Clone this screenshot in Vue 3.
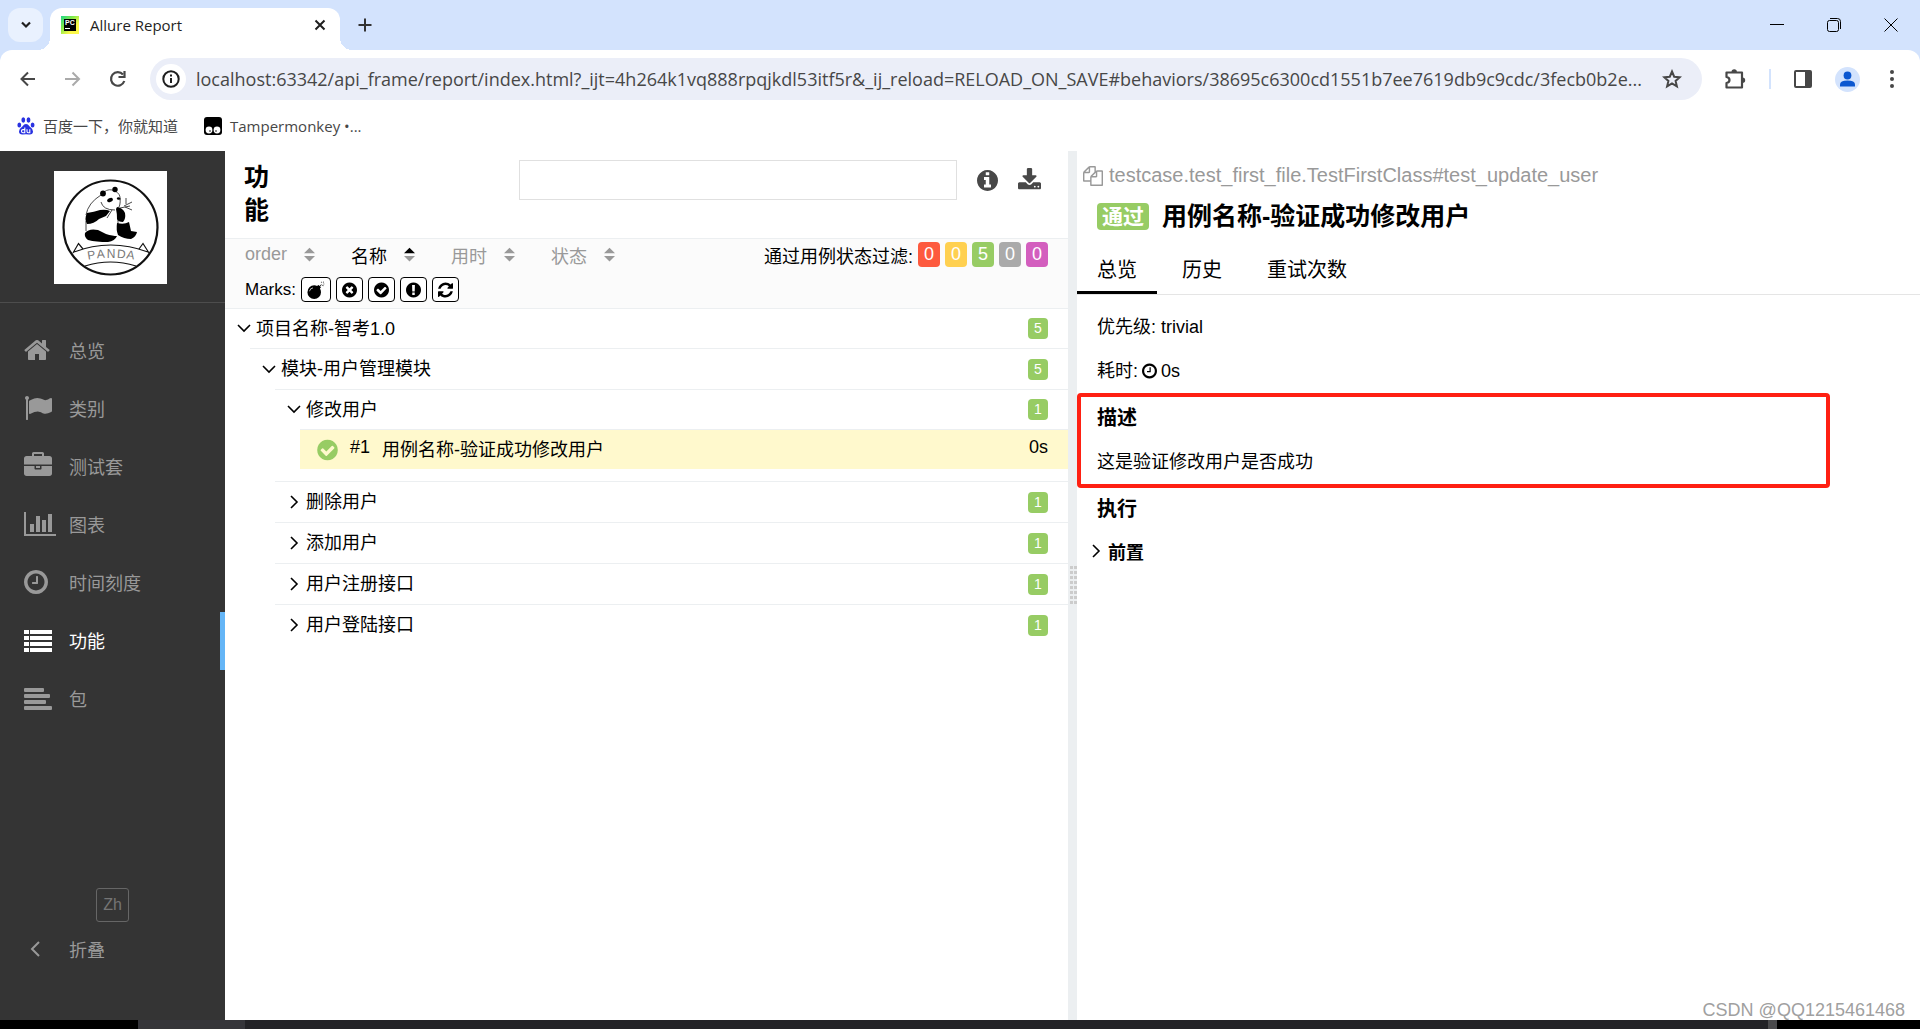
<script setup>
import { h, ref } from 'vue'

const disc = 'q0 209-103 385.5t-279.5 279.5-385.5 103-385.5-103-279.5-279.5-103-385.5 103-385.5 279.5-279.5 385.5-103 385.5 103 279.5 279.5 103 385.5z'

const glyphs = {
  home: ['64 0 1664 1792', 'M1472 992v480q0 26-19 45t-45 19h-384v-384h-256v384h-384q-26 0-45-19t-19-45v-480q0-1 .5-3t.5-3l575-474 575 474q1 2 1 6zm223-69l-62 74q-8 9-21 11h-3q-13 0-21-7l-692-577-692 577q-12 8-24 7-13-2-21-11l-62-74q-8-10-7-23.5t11-21.5l719-599q32-26 76-26t76 26l244 204v-195q0-14 9-23t23-9h192q14 0 23 9t9 23v408l219 182q10 8 11 21.5t-7 23.5z'],
  flag: ['0 0 1792 1792', 'M320 256q0 72-64 110v1266q0 13-9.500 22.500t-22.500 9.500h-64q-13 0-22.500-9.500t-9.500-22.500v-1266q-64-38-64-110 0-53 37.500-90.500t90.500-37.500 90.500 37.500 37.500 90.500zm1472 64v763q0 25-12.500 38.500t-39.500 27.500q-215 116-369 116-61 0-123.500-22t-108.500-48-115.500-48-142.500-22q-192 0-464 146-17 9-33 9-26 0-45-19t-19-45v-742q0-32 31-55 21-14 79-43 236-120 421-120 107 0 200 29t219 88q38 19 88 19 54 0 117.500-21t110-47 88-47 54.500-21q26 0 45 19t19 45z'],
  briefcase: ['0 0 1792 1792', 'M640 256h512v-128h-512v128zm1152 640v480q0 66-47 113t-113 47h-1472q-66 0-113-47t-47-113v-480h672v160q0 26 19 45t45 19h320q26 0 45-19t19-45v-160h672zm-768 0v128h-256v-128h256zm768-480v384h-1792v-384q0-66 47-113t113-47h352v-160q0-40 28-68t68-28h576q40 0 68 28t28 68v160h352q66 0 113 47t47 113z'],
  chart: ['0 0 2048 1792', 'M640 896v512h-256v-512h256zm384-512v1024h-256v-1024h256zm1024 1152v128h-2048v-1536h128v1408h1920zm-640-896v768h-256v-768h256zm384-384v1152h-256v-1152h256z'],
  clock: ['128 0 1536 1792', 'M1024 544v448q0 14-9 23t-23 9h-320q-14 0-23-9t-9-23v-64q0-14 9-23t23-9h224v-352q0-14 9-23t23-9h64q14 0 23 9t9 23zm416 352q0-148-73-273t-198-198-273-73-273 73-198 198-73 273 73 273 198 198 273 73 273-73 198-198 73-273zm224 0' + disc],
  list: ['0 0 1792 1792', 'M0 256h320v256h-320zM384 256h1408v256h-1408zM0 640h320v256h-320zM384 640h1408v256h-1408zM0 1024h320v256h-320zM384 1024h1408v256h-1408zM0 1408h320v256h-320zM384 1408h1408v256h-1408z'],
  align: ['0 0 1792 1792', 'M64 256h1152q64 0 64 64v128q0 64-64 64h-1152q-64 0-64-64v-128q0-64 64-64zM64 640h1536q64 0 64 64v128q0 64-64 64h-1536q-64 0-64-64v-128q0-64 64-64zM64 1024h1280q64 0 64 64v128q0 64-64 64h-1280q-64 0-64-64v-128q0-64 64-64zM64 1408h1664q64 0 64 64v128q0 64-64 64h-1664q-64 0-64-64v-128q0-64 64-64z'],
  times: ['128 0 1536 1792', 'M1277 1122q0-26-19-45l-181-181 181-181q19-19 19-45 0-27-19-46l-90-90q-19-19-46-19-26 0-45 19l-181 181-181-181q-19-19-45-19-27 0-46 19l-90 90q-19 19-19 46 0 26 19 45l181 181-181 181q-19 19-19 45 0 27 19 46l90 90q19 19 46 19 26 0 45-19l181-181 181 181q19 19 45 19 27 0 46-19l90-90q19-19 19-46zm387-226' + disc],
  check: ['128 0 1536 1792', 'M1412 734q0-28-18-46l-91-90q-19-19-45-19t-45 19l-408 407-226-226q-19-19-45-19t-45 19l-91 90q-18 18-18 46 0 27 18 45l362 362q19 19 45 19 27 0 46-19l543-543q18-18 18-45zm252 162' + disc],
  info: ['128 0 1536 1792', 'M1152 1376v-160q0-14-9-23t-23-9h-96v-512q0-14-9-23t-23-9h-320q-14 0-23 9t-9 23v160q0 14 9 23t23 9h96v320h-96q-14 0-23 9t-9 23v160q0 14 9 23t23 9h448q14 0 23-9t9-23zm-128-896v-160q0-14-9-23t-23-9h-192q-14 0-23 9t-9 23v160q0 14 9 23t23 9h192q14 0 23-9t9-23zm640 416' + disc],
  exclaim: ['128 0 1536 1792', 'M896 128q209 0 385.500 103t279.500 279.500 103 385.500-103 385.500-279.500 279.500-385.500 103-385.500-103-279.500-279.500-103-385.500 103-385.500 279.500-279.500 385.500-103zm128 1247v-190q0-14-9-23.500t-22-9.500h-192q-13 0-23 10t-10 23v190q0 13 10 23t23 10h192q13 0 22-9.500t9-23.500zm-2-344l18-621q0-12-10-18-10-8-24-8h-220q-14 0-24 8-10 6-10 18l17 621q0 10 10 17.500t24 7.500h185q14 0 23.500-7.500t10.500-17.500z'],
  refresh: ['128 0 1536 1792', 'M1639 1056q0 5-1 7-64 268-268 434.500t-478 166.500q-146 0-282.500-55t-243.500-157l-129 129q-19 19-45 19t-45-19-19-45v-448q0-26 19-45t45-19h448q26 0 45 19t19 45-19 45l-137 137q71 66 161 102t187 36q134 0 250-65t186-179q11-17 53-117 8-23 30-23h192q13 0 22.500 9.500t9.500 22.500zm25-800v448q0 26-19 45t-45 19h-448q-26 0-45-19t-19-45 19-45l138-138q-148-137-349-137-134 0-250 65t-186 179q-11 17-53 117-8 23-30 23h-199q-13 0-22.500-9.500t-9.500-22.500v-7q65-268 270-434.500t480-166.500q146 0 284 55.500t245 156.500l130-129q19-19 45-19t45 19 19 45z'],
  bomb: ['0 0 1792 1792', 'M128 1088a608 608 0 0 1 608-608q140 0 262 54l74-74q34-34 68 0l80 80 150-150 40 40-150 150 52 52q34 34 0 68l-64 64q96 140 96 324a608 608 0 0 1-1216 0zM288 1000q16 20 52 6 60-216 276-276 20-30-10-54-250 48-318 324zM1340 250h60v-90h-60zM1500 200l40 40 70-70-40-40zM1540 330v60h110v-60zM1490 420l-40 40 90 90 40-40z'],
  download: ['64 0 1664 1792', 'M1344 1344q0-26-19-45t-45-19-45 19-19 45 19 45 45 19 45-19 19-45zm256 0q0-26-19-45t-45-19-45 19-19 45 19 45 45 19 45-19 19-45zm128-224v320q0 40-28 68t-68 28h-1472q-40 0-68-28t-28-68v-320q0-40 28-68t68-28h465l135 136q58 56 136 56t136-56l136-136h464q40 0 68 28t28 68zm-325-569q17 41-14 70l-448 448q-18 19-45 19t-45-19l-448-448q-31-29-14-70 17-39 59-39h256v-448q0-26 19-45t45-19h256q26 0 45 19t19 45v448h256q42 0 59 39z'],
  copy: ['0 0 1792 1792', 'M1696 384q40 0 68 28t28 68v1216q0 40-28 68t-68 28h-960q-40 0-68-28t-28-68v-288h-544q-40 0-68-28t-28-68v-672q0-40 20-88t48-76l408-408q28-28 76-48t88-20h416q40 0 68 28t28 68v328q68-40 128-40h416zm-544 213l-299 299h299v-299zm-640-384l-299 299h299v-299zm196 647l316-316v-416h-384v416q0 40-28 68t-68 28h-416v640h512v-256q0-40 20-88t48-76zm956 804v-1152h-384v416q0 40-28 68t-68 28h-416v640h896z'],
}

const Glyph = (props) => {
  const [viewBox, d] = glyphs[props.name]
  const [, , w, ht] = viewBox.split(' ').map(Number)
  const height = Number(props.size)
  return h('svg', { viewBox, height, width: Math.round((w / ht) * height), 'aria-hidden': 'true' }, [
    h('path', { d, fill: 'currentColor' }),
  ])
}
Glyph.props = ['name', 'size']

const url = ref('localhost:63342/api_frame/report/index.html?_ijt=4h264k1vq888rpqjkdl53itf5r&_ij_reload=RELOAD_ON_SAVE#behaviors/38695c6300cd1551b7ee7619db9c9cdc/3fecb0b2e...')
const query = ref('')

const menu = [
  { icon: 'home', label: '总览' },
  { icon: 'flag', label: '类别' },
  { icon: 'briefcase', label: '测试套' },
  { icon: 'chart', label: '图表' },
  { icon: 'clock', label: '时间刻度' },
  { icon: 'list', label: '功能', active: true },
  { icon: 'align', label: '包' },
]

const sorters = [
  { label: 'order' },
  { label: '名称', active: true },
  { label: '用时' },
  { label: '状态' },
]

const statuses = [
  { name: 'failed', count: 0 },
  { name: 'broken', count: 0 },
  { name: 'passed', count: 5 },
  { name: 'skipped', count: 0 },
  { name: 'unknown', count: 0 },
]

const marks = ['bomb', 'times', 'check', 'exclaim', 'refresh']
const closed = ['删除用户', '添加用户', '用户注册接口', '用户登陆接口']
const tabs = ['总览', '历史', '重试次数']
</script>

<template>
  <div class="window">
    <header class="chrome">
      <div class="strip">
        <button class="tab-search" aria-label="Search tabs">
          <svg width="12" height="8" viewBox="0 0 12 8"><path d="M2 1.500l4 4 4-4" fill="none" stroke="#1f1f1f" stroke-width="2.200" /></svg>
        </button>
        <div class="tab">
          <svg width="18" height="18" viewBox="0 0 18 18">
            <defs>
              <linearGradient id="py" x1="0" y1="0" x2="1" y2="1">
                <stop offset="0" stop-color="#21d789" /><stop offset=".35" stop-color="#7ee84a" /><stop offset=".7" stop-color="#fcf84a" />
              </linearGradient>
            </defs>
            <rect width="18" height="18" fill="url(#py)" />
            <rect x="3" y="3" width="12" height="12" fill="#000" />
            <text x="4" y="9" font-size="7" font-weight="700" font-family="Liberation Sans, sans-serif" fill="#fff">PC</text>
            <rect x="4" y="12" width="5" height="1" fill="#fff" />
          </svg>
          <span class="tab-title">Allure Report</span>
          <button class="plain" aria-label="Close tab">
            <svg width="12" height="12" viewBox="0 0 12 12"><path d="M1.500 1.500l9 9M10.500 1.500l-9 9" stroke="#1f1f1f" stroke-width="2" /></svg>
          </button>
        </div>
        <button class="plain new-tab" aria-label="New tab">
          <svg width="14" height="14" viewBox="0 0 14 14"><path d="M7 .5v13M.5 7h13" stroke="#333" stroke-width="2" /></svg>
        </button>
        <div class="win-controls">
          <button class="plain" aria-label="Minimize"><svg width="14" height="14" viewBox="0 0 14 14"><path d="M0 6.500h14" stroke="#000" /></svg></button>
          <button class="plain" aria-label="Restore"><svg width="14" height="14" viewBox="0 0 14 14"><rect x=".5" y="2.500" width="11" height="11" rx="2" fill="none" stroke="#000" /><path d="M3 .5h7.500q3 0 3 3V11" fill="none" stroke="#000" /></svg></button>
          <button class="plain" aria-label="Close"><svg width="14" height="14" viewBox="0 0 14 14"><path d="M.5.5l13 13M13.500.5l-13 13" stroke="#000" /></svg></button>
        </div>
      </div>

      <div class="toolbar">
        <div class="nav">
          <button class="plain" aria-label="Back"><svg width="18" height="18" viewBox="0 0 18 18"><path d="M16 9H3M9 2.500L2.500 9l6.500 6.500" fill="none" stroke="#474747" stroke-width="2" /></svg></button>
          <button class="plain" aria-label="Forward"><svg width="18" height="18" viewBox="0 0 18 18"><path d="M1 9h14M8.500 2.500L15 9l-6.500 6.500" fill="none" stroke="#aaa" stroke-width="2" /></svg></button>
          <button class="plain" aria-label="Reload"><svg width="18" height="18" viewBox="0 0 18 18"><path d="M14 4.500A6.800 6.800 0 1 0 15.300 11" fill="none" stroke="#474747" stroke-width="2.200" /><path d="M15.500 1v6H9.500" fill="none" stroke="#474747" stroke-width="2.200" /></svg></button>
        </div>
        <div class="omnibox">
          <button class="site-info" aria-label="Site information">
            <svg width="18" height="18" viewBox="0 0 18 18"><circle cx="9" cy="9" r="7.700" fill="none" stroke="#1f1f1f" stroke-width="2" /><path d="M9 8v5M9 4.500v2" stroke="#1f1f1f" stroke-width="2" /></svg>
          </button>
          <input v-model="url" class="address" aria-label="Address" />
          <button class="plain" aria-label="Bookmark">
            <svg width="20" height="20" viewBox="0 0 20 20"><path d="M10 2.500l2.200 5.200 5.600.5-4.200 3.700 1.300 5.500-4.900-2.900-4.900 2.900 1.300-5.500L2.200 8.200l5.600-.5z" fill="none" stroke="#474747" stroke-width="2" /></svg>
          </button>
        </div>
        <div class="actions">
          <button class="plain" aria-label="Extensions">
            <svg width="22" height="22" viewBox="0 0 22 22"><path d="M2.500 4.500h15.500v15H2.500v-4.500q3-.5 3-3t-3-3z" fill="none" stroke="#474747" stroke-width="2.200" stroke-linejoin="round" /><path d="M7.500 4a2.700 2.700 0 0 1 5.400 0zM18.500 9.500a2.700 2.700 0 0 1 0 5.400z" fill="#474747" /></svg>
          </button>
          <span class="sep"></span>
          <button class="plain" aria-label="Side panel">
            <svg width="18" height="18" viewBox="0 0 18 18"><rect x="1" y="1" width="16" height="16" rx="1" fill="none" stroke="#474747" stroke-width="2" /><rect x="11" y="1" width="6" height="16" fill="#474747" /></svg>
          </button>
          <button class="plain" aria-label="Profile">
            <svg width="25" height="25" viewBox="0 0 25 25"><circle cx="12.500" cy="12.500" r="12.500" fill="#d3e3fd" /><circle cx="12.500" cy="8.500" r="3.900" fill="#0b57d0" /><path d="M5 19.500v-2q0-4 7.500-4t7.500 4v2z" fill="#0b57d0" /></svg>
          </button>
          <button class="plain more" aria-label="Menu">
            <svg width="6" height="20" viewBox="0 0 6 20"><circle cx="3" cy="3" r="2" fill="#474747" /><circle cx="3" cy="10" r="2" fill="#474747" /><circle cx="3" cy="17" r="2" fill="#474747" /></svg>
          </button>
        </div>
      </div>

      <nav class="bookmarks">
        <a href="#">
          <svg width="18" height="18" viewBox="0 0 18 18" fill="#2932e1"><ellipse cx="2.300" cy="8" rx="1.900" ry="2.500" /><ellipse cx="6.300" cy="3" rx="1.900" ry="2.700" /><ellipse cx="11.500" cy="3" rx="1.900" ry="2.700" /><ellipse cx="15.600" cy="8" rx="1.900" ry="2.500" /><path d="M9 7q2 0 3.400 2.300 3.600 2.700 3.600 5.200 0 3.300-4 3-3-.4-6 0-4 .3-4-3 0-2.500 3.600-5.200Q7 7 9 7z" /><path d="M7.800 10.500v5.300H6q-1.500 0-1.500-1.600T6 12.600h1.500M10 12.200v2.400q0 1.200 1.200 1.200h1.600v-3.600" fill="none" stroke="#fff" stroke-width="1.100" /></svg>
          百度一下，你就知道
        </a>
        <a href="#">
          <svg width="18" height="18" viewBox="0 0 18 18"><rect width="18" height="18" rx="3" fill="#000" /><circle cx="5" cy="13" r="3.400" fill="#fff" /><circle cx="13" cy="13" r="3.400" fill="#fff" /><circle cx="6" cy="14" r=".8" /><circle cx="12" cy="14" r=".8" /></svg>
          Tampermonkey •...
        </a>
      </nav>
    </header>

    <div class="report">
      <aside class="side">
        <div class="brand">
          <svg class="logo" width="113" height="113" viewBox="0 0 113 113" role="img" aria-label="PANDA">
            <rect width="113" height="113" fill="#fff" />
            <circle cx="56.500" cy="56.500" r="47" fill="none" stroke="#111" stroke-width="2.200" />
            <path d="M20 81Q56.500 67 94 81M31 95Q56.500 87 82 95M19 82l5.500-9.500L29 78M85 78l4-5.500L95 82" fill="none" stroke="#111" stroke-width="1.200" />
            <path d="M47 24Q34 32 32 44M66 27q1 8-3 12M32 50v10M47 31q2 8 14 8M64 45v14M66 37l10-2M70 35l8-4M71 36l7 3M72 33l0-6M58 39l-5 8" fill="none" stroke="#333" stroke-width=".9" />
            <path d="M50 21q5-4 11-1 6 3 5 9" fill="none" stroke="#444" stroke-width=".9" />
            <circle cx="49" cy="22.500" r="2.900" /><circle cx="61" cy="18.500" r="2.700" />
            <ellipse cx="56" cy="29" rx="3" ry="2" transform="rotate(-25 56 29)" /><ellipse cx="64.500" cy="27.500" rx="1.600" ry="1.300" />
            <path d="M33 42q7-1 13-3 6-1 10 1l-4 5-7 3q-5 5-12 5-3-5 0-11z" />
            <path d="M63 36q6 1 8 6 1 6-2 9-5 0-6-3 0-6-1-10z" />
            <path d="M63 52q7 2 12-1l2 9 6 1q-1 5-6 7-7 0-13-4-2-5-1-12z" />
            <path d="M31 62q4-5 13-3l8 4q7 2 11 2-2 5-9 6-12 0-20-2-4-3-3-7z" />
            <g font-family="Liberation Sans, sans-serif" font-size="12" fill="#777" text-anchor="middle">
              <text x="38" y="88" transform="rotate(-9 38 88)">P</text>
              <text x="47" y="87" transform="rotate(-4 47 87)">A</text>
              <text x="57" y="87">N</text>
              <text x="67" y="87" transform="rotate(4 67 87)">D</text>
              <text x="76" y="88" transform="rotate(9 76 88)">A</text>
            </g>
          </svg>
        </div>
        <nav class="menu">
          <a v-for="m in menu" :key="m.label" href="#" :class="{ active: m.active }">
            <span class="menu-icon"><Glyph :name="m.icon" size="28" /></span>{{ m.label }}
          </a>
        </nav>
        <div class="side-foot">
          <button class="lang">Zh</button>
          <button class="collapse">
            <span class="menu-icon chevron-left"><svg width="11" height="16" viewBox="0 0 11 16"><path d="M9 1L2 8l7 7" fill="none" stroke="#999" stroke-width="2" /></svg></span>折叠
          </button>
        </div>
      </aside>

      <main class="tree-pane">
        <div class="pane-head">
          <h1>功能</h1>
          <input v-model="query" class="search" type="text" aria-label="Search" />
          <button class="plain tool" aria-label="Info"><Glyph name="info" size="25" /></button>
          <button class="plain tool" aria-label="Download"><Glyph name="download" size="25" /></button>
        </div>

        <div class="controls">
          <div class="control-row">
            <button v-for="s in sorters" :key="s.label" class="sorter" :class="{ active: s.active }">
              {{ s.label }}
              <svg width="11" height="15" viewBox="0 0 12 15"><path class="up" d="M0 6L6 0l6 6z" /><path d="M0 9h12l-6 6z" fill="#999" /></svg>
            </button>
            <div class="status-filter">
              <span>通过用例状态过滤:</span>
              <button v-for="s in statuses" :key="s.name" :class="s.name">{{ s.count }}</button>
            </div>
          </div>
          <div class="control-row marks">
            <span>Marks:</span>
            <button v-for="m in marks" :key="m" :aria-label="m" :class="{ wide: m === 'bomb' }"><Glyph :name="m" :size="m === 'bomb' ? 20 : 18" /></button>
          </div>
        </div>

        <div class="tree">
          <div class="node root">
            <svg class="arrow" width="14" height="9" viewBox="0 0 14 9"><path d="M1 1l6 6 6-6" /></svg>
            <span class="name">项目名称-智考1.0</span><span class="count">5</span>
          </div>
          <div class="branch">
            <div class="node">
              <svg class="arrow" width="14" height="9" viewBox="0 0 14 9"><path d="M1 1l6 6 6-6" /></svg>
              <span class="name">模块-用户管理模块</span><span class="count">5</span>
            </div>
            <div class="branch">
              <div class="node open">
                <svg class="arrow" width="14" height="9" viewBox="0 0 14 9"><path d="M1 1l6 6 6-6" /></svg>
                <span class="name">修改用户</span><span class="count">1</span>
              </div>
              <div class="branch leaves">
                <a href="#" class="node leaf">
                  <Glyph class="ok" name="check" size="24" />
                  <span class="order">#1</span>
                  <span class="name">用例名称-验证成功修改用户</span>
                  <span class="time">0s</span>
                </a>
              </div>
              <div v-for="c in closed" :key="c" class="node">
                <svg class="arrow" width="14" height="14" viewBox="0 0 14 14"><path d="M4 1l6 6-6 6" /></svg>
                <span class="name">{{ c }}</span><span class="count">1</span>
              </div>
            </div>
          </div>
        </div>
      </main>

      <div class="gutter"><div class="grip"></div></div>

      <section class="detail">
        <div class="full-name"><Glyph name="copy" size="20" />testcase.test_first_file.TestFirstClass#test_update_user</div>
        <h2><span class="badge">通过</span>用例名称-验证成功修改用户</h2>
        <div class="tabs">
          <button v-for="(t, i) in tabs" :key="t" :class="{ active: i === 0 }">{{ t }}</button>
        </div>
        <p class="line first">优先级: trivial</p>
        <p class="line">耗时: <Glyph class="clock" name="clock" size="18" /> 0s</p>
        <div class="marked">
          <h3>描述</h3>
          <p class="line">这是验证修改用户是否成功</p>
        </div>
        <div class="execution">
          <h3>执行</h3>
          <button class="setup">
            <svg width="9" height="14" viewBox="0 0 9 14"><path d="M1 1l6 6-6 6" fill="none" stroke="#000" stroke-width="1.600" /></svg>前置
          </button>
        </div>
      </section>
    </div>

    <div class="taskbar"><i class="t1"></i><i class="t2"></i><i class="t3"></i><i class="t4"></i><i class="t5"></i></div>
    <div class="watermark">CSDN @QQ1215461468</div>
  </div>
</template>

<style>
body {
  margin: 0;
  background: #fff;
}
</style>

<style scoped>
* {
  box-sizing: border-box;
}
button,
input {
  font: inherit;
  color: inherit;
}
button {
  cursor: pointer;
}
svg {
  display: block;
  flex: none;
}
a {
  color: inherit;
  text-decoration: none;
}
h1,
h2,
h3,
p {
  margin: 0;
}
.window {
  position: relative;
  display: flex;
  flex-direction: column;
  min-height: 100vh;
  font-family: "Liberation Sans", "Noto Sans CJK SC", sans-serif;
  font-size: 18px;
  color: #000;
}
.plain {
  display: flex;
  padding: 0;
  border: 0;
  background: none;
}

/* Browser frame */
.chrome {
  font-family: "Open Sans", "Noto Sans CJK SC", sans-serif;
  background: #d3e3fd;
}
.strip {
  display: flex;
  align-items: center;
  height: 50px;
  padding: 0 8px;
}
.tab-search {
  display: flex;
  align-items: center;
  justify-content: center;
  width: 35px;
  height: 34px;
  padding: 0;
  border: 0;
  border-radius: 12px;
  background: #e9f1fe;
}
.tab {
  position: relative;
  display: flex;
  align-items: center;
  align-self: flex-end;
  width: 290px;
  height: 42px;
  margin-left: 7px;
  padding: 0 14px 8px 11px;
  border-radius: 12px 12px 0 0;
  background: #fff;
}
.tab::before,
.tab::after {
  content: "";
  position: absolute;
  bottom: 0;
  width: 12px;
  height: 12px;
}
.tab::before {
  right: 100%;
  background: radial-gradient(circle at 0 0, transparent 12px, #fff 12px);
}
.tab::after {
  left: 100%;
  background: radial-gradient(circle at 100% 0, transparent 12px, #fff 12px);
}
.tab-title {
  flex: 1;
  padding-left: 11px;
  font-size: 15px;
  color: #1f1f1f;
}
.new-tab {
  margin-left: 18px;
}
.win-controls {
  display: flex;
  gap: 43px;
  margin-left: auto;
  padding-right: 14px;
}
.toolbar {
  display: flex;
  align-items: center;
  height: 58px;
  padding: 0 25px 0 19px;
  border-radius: 12px 12px 0 0;
  background: #fff;
}
.nav {
  display: flex;
  gap: 27px;
}
.omnibox {
  flex: 1;
  display: flex;
  align-items: center;
  gap: 10px;
  height: 42px;
  margin: 0 22px 0 23px;
  padding: 0 20px 0 6px;
  border-radius: 21px;
  background: #ebeef8;
}
.site-info {
  display: flex;
  align-items: center;
  justify-content: center;
  width: 30px;
  height: 30px;
  padding: 0;
  border: 0;
  border-radius: 50%;
  background: #fff;
}
.address {
  flex: 1;
  min-width: 0;
  padding: 0;
  border: 0;
  outline: 0;
  background: none;
  font-size: 18px;
  color: #474747;
}
.actions {
  display: flex;
  align-items: center;
  gap: 23px;
}
.more {
  margin-left: 6px;
}
.sep {
  width: 2px;
  height: 20px;
  background: #d3e3fd;
}
.bookmarks {
  display: flex;
  align-items: center;
  gap: 26px;
  height: 43px;
  padding: 0 17px 8px;
  background: #fff;
  font-size: 15px;
  color: #474747;
}
.bookmarks a {
  display: flex;
  align-items: center;
  gap: 8px;
}

/* Report */
.report {
  flex: 1;
  display: flex;
}
.side {
  flex: none;
  display: flex;
  flex-direction: column;
  width: 225px;
  background: #343434;
  color: #999;
}
.brand {
  display: flex;
  justify-content: center;
  padding: 20px 4px 18px 0;
  border-bottom: 1px solid #4d4d4d;
}
.menu {
  padding-top: 19px;
}
.menu a {
  display: flex;
  align-items: center;
  height: 58px;
  padding: 0 0 3px 24px;
}
.menu a.active {
  border-right: 5px solid #64b5f6;
  color: #fff;
}
.menu-icon {
  width: 45px;
}
.side-foot {
  display: flex;
  flex-direction: column;
  margin-top: auto;
  padding-bottom: 42px;
}
.lang {
  align-self: center;
  width: 33px;
  height: 34px;
  padding: 0;
  border: 1px solid #666;
  border-radius: 3px;
  background: none;
  font-size: 16px;
  color: #757575;
}
.collapse {
  display: flex;
  align-items: center;
  height: 56px;
  padding: 0 0 3px 24px;
  border: 0;
  background: none;
}
.chevron-left {
  padding-left: 6px;
}

.tree-pane,
.detail {
  flex: 1;
  min-width: 0;
}
.pane-head {
  display: flex;
  align-items: flex-start;
  height: 87px;
  padding: 9px 27px 0 19px;
}
.pane-head h1 {
  width: 25px;
  padding-top: 1px;
  font-size: 25px;
  line-height: 33px;
}
.search {
  flex: none;
  width: 55%;
  height: 40px;
  margin-left: auto;
  padding: 0 12px;
  border: 1px solid #e0e0e0;
  outline: 0;
}
.tool {
  margin-top: 8px;
  margin-left: 20px;
  color: #484848;
}
.controls {
  height: 71px;
  border: 1px solid #eceff1;
  border-width: 1px 0;
  background: #fbfbfb;
}
.control-row {
  display: flex;
  align-items: center;
  height: 31px;
  padding: 0 20px;
}
.sorter {
  display: flex;
  align-items: center;
  justify-content: flex-end;
  gap: 17px;
  width: 70px;
  height: 25px;
  margin-right: 30px;
  padding: 0;
  border: 0;
  background: none;
  color: #999;
}
.sorter path {
  fill: #999;
}
.sorter.active,
.sorter.active .up {
  color: #000;
  fill: #000;
}
.status-filter {
  display: flex;
  align-items: center;
  gap: 5px;
  margin-left: auto;
}
.status-filter button {
  width: 22px;
  height: 25px;
  padding: 0;
  border: 0;
  border-radius: 4px;
  color: #fff;
}
.failed {
  background: #fd5a3e;
}
.broken {
  background: #ffd050;
}
.passed {
  background: #97cc64;
}
.skipped {
  background: #aaa;
}
.unknown {
  background: #d35ebe;
}
.marks {
  gap: 5px;
  height: 39px;
  font-size: 17px;
}
.marks button {
  display: flex;
  align-items: center;
  justify-content: center;
  width: 27px;
  height: 25px;
  padding: 0;
  border: 1px solid #000;
  border-radius: 4px;
  background: #fff;
}
.marks .wide {
  width: 30px;
}

.node {
  display: flex;
  align-items: center;
  height: 41px;
  padding: 0 20px 0 12px;
  border-top: 1px solid #eceff1;
}
.root {
  height: 39px;
  border-top: 0;
}
.open,
.leaf {
  height: 40px;
}
.branch {
  margin-left: 25px;
}
.arrow {
  margin-right: 5px;
  fill: none;
  stroke: #000;
  stroke-width: 1.6;
}
.name {
  flex: 1;
}
.name,
.order,
.time {
  padding-bottom: 4px;
}
.count {
  width: 20px;
  border-radius: 4px;
  background: #97cc64;
  color: #fff;
  font-size: 14px;
  line-height: 21px;
  text-align: center;
}
.leaves {
  padding-bottom: 12px;
}
.leaf {
  padding-left: 17px;
  background: #fff9cd;
}
.ok {
  color: #97cc64;
}
.order {
  padding-right: 12px;
  padding-left: 12px;
}

.gutter {
  flex: none;
  display: flex;
  align-items: center;
  width: 9px;
  background: #eceff1;
}
.grip {
  width: 7px;
  height: 39px;
  margin-left: 2px;
  background: repeating-linear-gradient(transparent 0 3px, #eceff1 3px 5px), repeating-linear-gradient(90deg, #ccc 0 3px, transparent 3px 4px);
}

.full-name {
  display: flex;
  align-items: center;
  gap: 6px;
  padding: 13px 0 0 6px;
  font-size: 20px;
  line-height: 23px;
  color: #999;
}
h2 {
  display: flex;
  align-items: center;
  gap: 13px;
  padding: 13px 20px 12px;
  font-size: 25px;
  line-height: 33px;
}
.badge {
  padding: 0 5px;
  border-radius: 4px;
  background: #97cc64;
  color: #fff;
  font-size: 21px;
  line-height: 27px;
}
.tabs {
  display: flex;
  gap: 5px;
  height: 50px;
  border-bottom: 1px solid #e5e5e5;
  font-size: 20px;
}
.tabs button {
  padding: 0 20px;
  border: 0;
  border-bottom: 3px solid transparent;
  background: none;
}
.tabs .active {
  border-bottom-color: #000;
}
.line {
  display: flex;
  align-items: center;
  gap: 4px;
  padding-left: 20px;
  line-height: 44px;
}
.first {
  padding-top: 10px;
}
.marked {
  height: 95px;
  margin-right: 90px;
  border: 4px solid #ff2012;
  border-radius: 4px;
}
.marked h3,
.marked .line {
  padding-left: 16px;
}
.marked .line {
  line-height: 46px;
}
h3 {
  font-size: 20px;
  line-height: 42px;
}
.execution {
  padding-left: 15px;
}
.execution h3 {
  padding-left: 5px;
}
.setup {
  display: flex;
  align-items: center;
  gap: 7px;
  height: 42px;
  padding: 0;
  border: 0;
  background: none;
  font-weight: 700;
}

.taskbar {
  display: flex;
  height: 9px;
  background: #000;
}
.t1 {
  width: 138px;
}
.t2 {
  width: 107px;
  background: #35353a;
}
.t3 {
  flex: 1;
  background: #222226;
}
.t4 {
  width: 9px;
  background: #4a4a4c;
}
.t5 {
  width: 143px;
}
.watermark {
  position: absolute;
  right: 15px;
  bottom: 8px;
  font-size: 18px;
  line-height: 22px;
  color: #a0a0a0;
}
</style>
